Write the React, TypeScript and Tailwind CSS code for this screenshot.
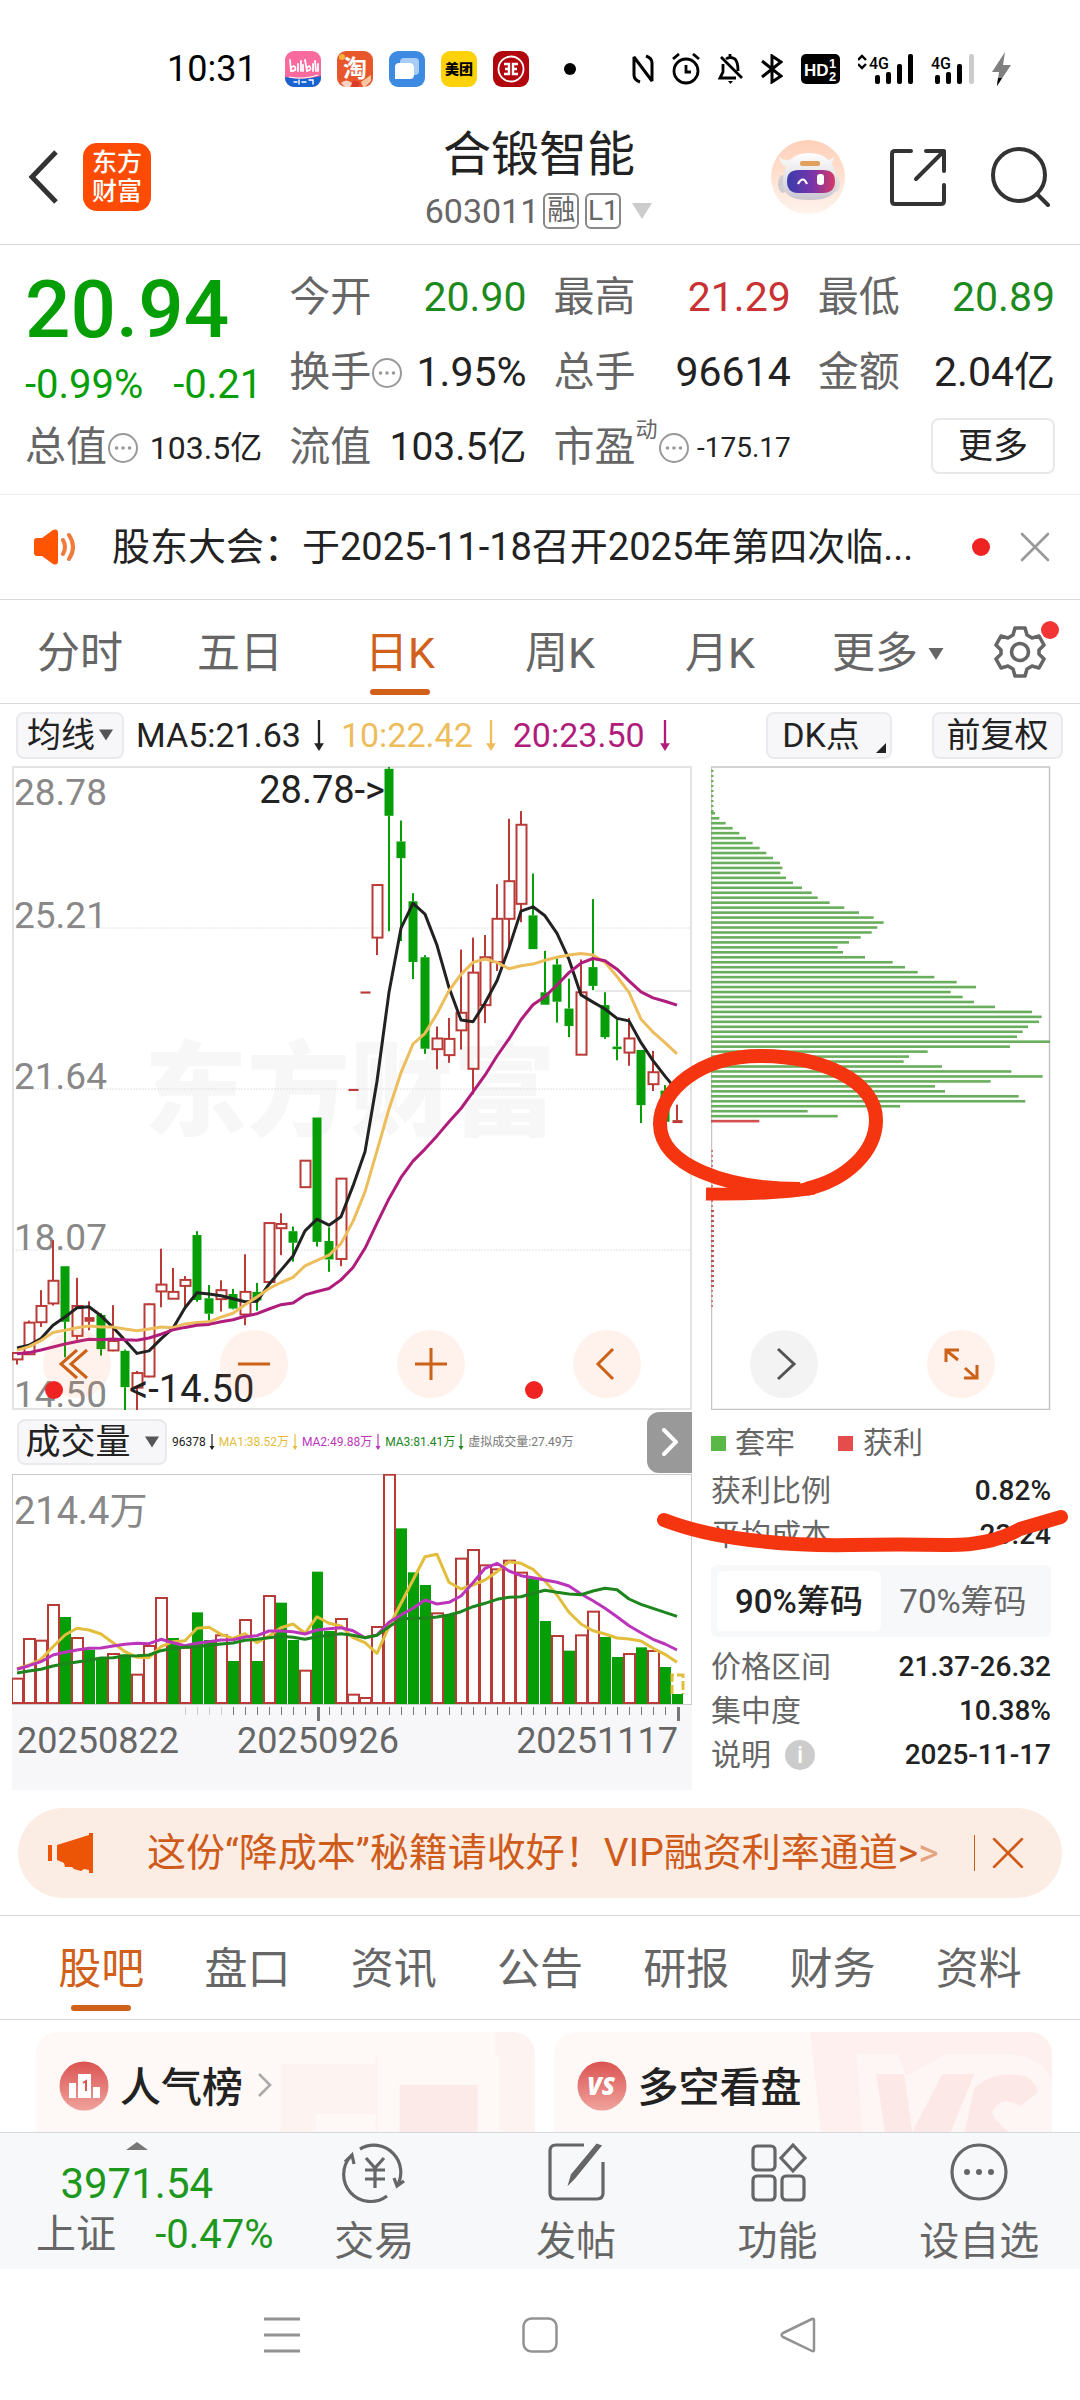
import React from "react";

type Candle = [kind: "r" | "g" | "f", high: number, top: number, bottom: number, low: number];

/* Candle and average values are in chart units: 2.34 units per pixel, measured down from y = 750. */
const candles: Candle[] = [
  ["r", 1411, 1411, 1426, 1438], ["r", 1335, 1340, 1414, 1414], ["r", 1264, 1301, 1339, 1350], ["r", 1147, 1242, 1295, 1300],
  ["g", 1208, 1208, 1338, 1421], ["r", 1235, 1301, 1371, 1380], ["f", 1290, 1327, 1338, 1358], ["g", 1318, 1322, 1402, 1417],
  ["r", 1299, 1383, 1405, 1407], ["g", 1403, 1406, 1491, 1547], ["r", 1453, 1458, 1492, 1545], ["r", 1295, 1297, 1466, 1468],
  ["r", 1167, 1251, 1267, 1304], ["r", 1212, 1268, 1284, 1284], ["r", 1231, 1240, 1254, 1305], ["g", 1126, 1135, 1287, 1291],
  ["g", 1252, 1283, 1319, 1335], ["r", 1241, 1264, 1285, 1314], ["g", 1261, 1273, 1307, 1309], ["r", 1180, 1268, 1321, 1346],
  ["g", 1247, 1268, 1288, 1312], ["r", 1107, 1107, 1245, 1247], ["r", 1084, 1109, 1119, 1182], ["g", 1115, 1126, 1153, 1197],
  ["r", 961, 961, 1023, 1023], ["g", 860, 860, 1151, 1162], ["g", 1117, 1149, 1192, 1221], ["r", 1003, 1003, 1191, 1208],
  ["f", 793, 793, 798, 798], ["f", 565, 565, 570, 570], ["r", 316, 316, 439, 480], ["g", 40, 44, 154, 424],
  ["g", 165, 214, 253, 447], ["g", 335, 354, 496, 536], ["g", 480, 485, 699, 711], ["r", 647, 675, 700, 747],
  ["r", 627, 676, 714, 732], ["r", 467, 615, 656, 701], ["r", 439, 521, 746, 806], ["r", 433, 485, 597, 639],
  ["r", 314, 395, 496, 517], ["r", 161, 307, 395, 463], ["r", 143, 175, 360, 403], ["g", 289, 387, 466, 466],
  ["g", 470, 567, 596, 596], ["g", 484, 502, 589, 638], ["g", 535, 605, 646, 672], ["r", 490, 567, 713, 713],
  ["g", 349, 508, 552, 562], ["g", 567, 597, 672, 676], ["g", 630, 694, 700, 726], ["r", 627, 675, 708, 739],
  ["g", 702, 702, 831, 873], ["r", 704, 754, 782, 798], ["g", 784, 797, 870, 885], ["f", 830, 866, 873, 873],
];

const ma5 = [1399, 1393, 1377, 1346, 1327, 1305, 1303, 1324, 1351, 1381, 1412, 1406, 1378, 1353, 1305, 1270, 1273, 1277, 1284, 1291, 1290, 1250, 1217, 1184, 1125, 1098, 1112, 1092, 1020, 940, 775, 567, 417, 359, 384, 457, 556, 632, 636, 592, 540, 463, 377, 367, 388, 429, 490, 573, 590, 606, 628, 634, 685, 727, 763, 797];
const ma10 = [1405, 1396, 1382, 1363, 1358, 1352, 1348, 1350, 1350, 1355, 1359, 1355, 1350, 1352, 1343, 1340, 1338, 1327, 1318, 1298, 1280, 1260, 1246, 1234, 1207, 1194, 1182, 1155, 1103, 1034, 938, 840, 755, 688, 663, 617, 563, 525, 497, 489, 497, 512, 505, 501, 492, 485, 480, 476, 480, 497, 530, 567, 630, 660, 685, 711];
const ma20 = [1413, 1410, 1404, 1397, 1390, 1384, 1379, 1380, 1378, 1380, 1381, 1376, 1367, 1357, 1351, 1346, 1344, 1338, 1333, 1325, 1319, 1308, 1298, 1294, 1275, 1267, 1260, 1240, 1211, 1166, 1107, 1050, 1000, 962, 934, 903, 870, 839, 800, 761, 716, 676, 631, 596, 577, 550, 521, 499, 488, 493, 513, 540, 566, 580, 588, 597];

/* Volume values are in thirds of a pixel, measured down from y = 1400. */
const volumeTops = [836, 717, 722, 615, 651, 714, 749, 775, 762, 763, 824, 738, 594, 714, 743, 637, 720, 706, 783, 660, 783, 588, 608, 720, 812, 515, 693, 657, 884, 894, 681, 224, 385, 517, 555, 640, 645, 476, 450, 496, 508, 482, 518, 535, 663, 708, 752, 706, 635, 711, 771, 762, 742, 753, 801, 882];
const volumeKinds = "rrrrgrggrgrrrgrggrgrgrggrggrrrrrgggrgrrrrrrggrgrrggrgrgg";
const vma1 = [806, 795, 778, 740, 705, 685, 690, 702, 728, 755, 772, 773, 740, 725, 722, 685, 682, 703, 715, 701, 728, 708, 683, 672, 700, 650, 670, 678, 713, 728, 760, 680, 610, 540, 470, 463, 547, 567, 555, 540, 515, 485, 490, 508, 543, 585, 637, 672, 692, 702, 714, 717, 723, 745, 763, 787];
const vma2 = [808, 797, 785, 765, 757, 750, 745, 744, 738, 733, 730, 731, 718, 728, 737, 730, 725, 720, 719, 711, 707, 693, 693, 695, 702, 690, 686, 683, 692, 713, 705, 667, 645, 625, 600, 612, 607, 588, 548, 505, 490, 513, 527, 533, 540, 547, 558, 582, 602, 625, 650, 677, 698, 718, 732, 750];
const vma3 = [819, 813, 808, 798, 791, 786, 781, 774, 773, 768, 767, 765, 752, 745, 742, 740, 736, 732, 729, 721, 718, 713, 709, 712, 718, 710, 706, 701, 706, 713, 706, 680, 657, 655, 655, 651, 645, 635, 620, 610, 598, 592, 590, 580, 571, 577, 582, 584, 573, 565, 569, 597, 613, 625, 637, 649];

const chips = [225, 238, 257, 278, 298, 318, 338, 359, 379, 399, 420, 427, 421, 438, 459, 486, 515, 533, 569, 613, 657, 701, 731, 712, 695, 662, 627, 593, 609, 675, 758, 795, 833, 883, 950, 1008, 932, 968, 1002, 1065, 1176, 1205, 1197, 1164, 1148, 1131, 1230, 1110, 863, 807, 791, 906, 1114, 1208, 1052, 885, 915, 1136, 1156, 780, 503, 593, 358];

const cx = (i: number) => 17 + i * 12;
const py = (v: number) => 750 + v / 2.34;
const vy = (v: number) => 1400 + v / 3;
const line = (values: number[], y: (v: number) => number) =>
  values.map((v, i) => `${cx(i)},${y(v).toFixed(1)}`).join(" ");

const RED = "#b93a37";
const GREEN = "#069e06";

function PriceChart() {
  return (
    <svg viewBox="12 766 680 644" className="block w-full" role="img" aria-label="日K线图">
      <g fontFamily="'Noto Sans CJK SC', sans-serif" fontWeight="900" fontSize="103" fill="#f7f7f7">
        <text x="144" y="1128">东方财富</text>
      </g>
      <rect x="13" y="767" width="678" height="642" fill="none" stroke="#e3e3e3" strokeWidth="2" />
      <g stroke="#e2e2e2" strokeWidth="1" strokeDasharray="2 1">
        <path d="M13 928H691M13 1089H691M13 1250H691" />
      </g>
      <path d="M595 991H691" stroke="#cfcfcf" strokeWidth="1" />
      <g fontFamily="Roboto, 'Noto Sans CJK SC', sans-serif" fontSize="37" fill="#888">
        <text x="14" y="805">28.78</text>
        <text x="14" y="928">25.21</text>
        <text x="14" y="1089">21.64</text>
        <text x="14" y="1250">18.07</text>
        <text x="14" y="1407">14.50</text>
      </g>
      {candles.map(([kind, high, top, bottom, low], i) => {
        const x = cx(i);
        const color = kind === "g" ? GREEN : RED;
        const h = Math.max(py(bottom) - py(top), 2);
        return (
          <g key={i} fill={color} stroke="none">
            {top > high && <rect x={x - 1} y={py(high)} width="2" height={py(top) - py(high)} />}
            {low > bottom && <rect x={x - 1} y={py(bottom)} width="2" height={py(low) - py(bottom)} />}
            {kind === "r" ? (
              <rect x={x - 4.5} y={py(top)} width="10" height={h} fill="none" stroke={RED} strokeWidth="2" />
            ) : (
              <rect x={x - 4.5} y={py(top)} width={kind === "f" ? 10 : 9} height={h} />
            )}
          </g>
        );
      })}
      <g fill="none" strokeWidth="3" strokeLinejoin="round">
        <polyline points={line(ma5, py)} stroke="#222" />
        <polyline points={line(ma10, py)} stroke="#edbd5c" />
        <polyline points={line(ma20, py)} stroke="#b01c7c" />
      </g>
      <g fontFamily="Roboto, sans-serif" fontSize="38" fill="#222">
        <text x="385" y="803" textAnchor="end">28.78-&gt;</text>
        <text x="129" y="1402">&lt;-14.50</text>
      </g>
    </svg>
  );
}

function VolumeChart() {
  return (
    <svg viewBox="12 1474 680 316" className="block w-full" role="img" aria-label="成交量图">
      <rect x="12" y="1705" width="680" height="85" fill="#f7f7fa" />
      <rect x="12.5" y="1474.5" width="679" height="230" fill="#fff" stroke="#ccc" />
      <text x="14" y="1524" fontFamily="Roboto, 'Noto Sans CJK SC', sans-serif" fontSize="38" fill="#888">214.4万</text>
      {volumeTops.map((v, i) => {
        const y = vy(v);
        return volumeKinds[i] === "r" ? (
          <rect key={i} x={cx(i) - 5} y={y} width="11" height={1703 - y} fill="#fff" stroke={RED} strokeWidth="2" />
        ) : (
          <rect key={i} x={cx(i) - 5} y={y} width="11" height={1704 - y} fill={GREEN} />
        );
      })}
      <path d="M672 1694V1675H683V1694" fill="none" stroke="#e3bd3c" strokeWidth="3" strokeDasharray="9 3" />
      <g fill="none" strokeWidth="3" strokeLinejoin="round">
        <polyline points={line(vma1, vy)} stroke="#e3bd3c" />
        <polyline points={line(vma2, vy)} stroke="#bb35bb" />
        <polyline points={line(vma3, vy)} stroke="#1c851c" />
      </g>
      {Array.from({ length: 42 }, (_, k) => k + 14).map((i) => {
        const major = i === 25 || i === 55;
        return (
          <rect key={i} x={cx(i)} y="1707" width={major ? 3 : 1} height={major ? 14 : 8} fill={i < 18 ? "#ccc" : "#777"} />
        );
      })}
      <g fontFamily="Roboto, sans-serif" fontSize="36" fill="#666">
        <text x="17" y="1753">20250822</text>
        <text x="318" y="1753" textAnchor="middle">20250926</text>
        <text x="678" y="1753" textAnchor="end">20251117</text>
      </g>
    </svg>
  );
}

function ChipChart() {
  return (
    <svg viewBox="711 766 340 644" className="block w-full" role="img" aria-label="筹码分布图">
      <rect x="711.5" y="767" width="338" height="642.5" fill="#fff" stroke="#c4c4c4" strokeWidth="1.5" />
      <path d="M712 770V812" stroke="#6fae60" strokeWidth="3" strokeDasharray="2 3" />
      <path d="M712 1150V1210M712 1290V1310" stroke="#d08080" strokeWidth="2" strokeDasharray="2 3" />
      <path d="M712.5 1210V1290" stroke="#c65050" strokeWidth="3" strokeDasharray="2 3" />
      {chips.map((end, i) => (
        <rect
          key={i}
          x="711"
          y={812 + i * 4.965}
          width={(end - 213) / 3}
          height="2.6"
          fill={i === chips.length - 1 ? "#d25050" : "#69ae5c"}
        />
      ))}
    </svg>
  );
}

function Caret({ className }: { className: string }) {
  return (
    <svg viewBox="0 0 20 16" className={className} fill="currentColor" aria-hidden="true">
      <path d="M0 0H20L10 16Z" />
    </svg>
  );
}

function DownArrow({ className }: { className: string }) {
  return (
    <svg viewBox="0 0 12 32" className={className} fill="none" stroke="currentColor" aria-hidden="true">
      <path d="M6 0V30" strokeWidth="2.4" />
      <path d="M1 24H11L6 32Z" fill="currentColor" stroke="none" />
    </svg>
  );
}

function More() {
  return (
    <svg viewBox="0 0 32 32" className="h-8 w-8 shrink-0" aria-hidden="true">
      <circle cx="16" cy="16" r="14" fill="none" stroke="#999" strokeWidth="2" />
      <g fill="#999"><circle cx="9.500" cy="16" r="1.8" /><circle cx="16" cy="16" r="1.8" /><circle cx="22.500" cy="16" r="1.8" /></g>
    </svg>
  );
}

function Close({ className }: { className: string }) {
  return (
    <svg viewBox="0 0 30 30" className={className} fill="none" stroke="currentColor" strokeWidth="2.6" strokeLinecap="round" aria-hidden="true">
      <path d="M2 2L28 28M28 2L2 28" />
    </svg>
  );
}

function StatusBar() {
  return (
    <div className="flex h-[110px] items-center justify-between pt-7 pr-[68px] pl-[167px]">
      <div className="flex items-center">
        <span className="w-[118px] text-[36px] leading-none text-black">10:31</span>
        <div className="flex items-center gap-4">
          <svg viewBox="0 0 36 36" className="h-9 w-9" aria-hidden="true">
            <rect width="36" height="36" rx="9" fill="#fb6a9c" />
            <path d="M0 26Q18 30 36 25V27A9 9 0 0 1 27 36H9A9 9 0 0 1 0 27Z" fill="#1763d0" />
            <g fill="none" stroke="#fff" strokeWidth="1.8" strokeLinecap="round">
              <path d="M5 9L6 20Q12 20 10 16Q8 14 6 17M13 13V20M16 10V20M18 14V20M20 9L22 20Q27 19 25 16Q24 14 22 17M28 13V20M30 10L31 20M33 13V20" />
              <path d="M9 31H12M14 29V33M17 31H21M24 29H28V33" strokeWidth="1.4" />
            </g>
            <path d="M4 26Q18 29 33 24" stroke="#fff" strokeWidth="1" fill="none" />
          </svg>
          <div className="relative flex h-9 w-9 items-center justify-center rounded-[9px] bg-[#e8572b] text-[24px] leading-none font-bold text-white">
            淘
            <svg viewBox="0 0 36 36" className="absolute inset-0 h-9 w-9" aria-hidden="true">
              <circle cx="5" cy="6" r="3" fill="#f5b23c" />
              <path d="M4 32Q9 27 15 32L13 36H8Z" fill="#f3d4c4" /><path d="M15 31Q19 28 23 32L21 36H15Z" fill="#d93a2c" />
              <path d="M24 31L34 24V30L28 36H26Z" fill="#f9c6a4" />
            </svg>
          </div>
          <svg viewBox="0 0 36 36" className="h-9 w-9" aria-hidden="true">
            <rect width="36" height="36" rx="9" fill="#3d8ae2" />
            <rect x="11" y="7" width="19" height="17" rx="4" fill="#a8cdf5" />
            <path d="M10 12H20Q25 12 25 17V24Q25 28 21 28H6V16Q6 12 10 12Z" fill="#fff" />
          </svg>
          <div className="flex h-9 w-9 items-center justify-center rounded-[9px] bg-[#fdd20a] text-[14px] leading-none font-black text-black">美团</div>
          <svg viewBox="0 0 36 36" className="h-9 w-9" fill="none" stroke="#fff" aria-hidden="true">
            <rect width="36" height="36" rx="9" fill="#b1060d" stroke="none" />
            <circle cx="18" cy="18" r="12.500" strokeWidth="1.8" />
            <path d="M11 13H16V23H11M25 13H20V23H25M12 18H16M20 18H24" strokeWidth="2.4" />
          </svg>
        </div>
        <span className="ml-[35px] h-3 w-3 rounded-full bg-black" />
      </div>
      <div className="flex items-center gap-[18px]">
        <svg viewBox="0 0 22 30" className="h-[30px] w-[22px]" fill="none" stroke="#000" strokeWidth="3" aria-hidden="true">
          <path d="M8 28Q2 26 2 21V3L20 27V9Q20 4 14 2" strokeLinejoin="bevel" />
        </svg>
        <svg viewBox="0 0 28 32" className="h-8 w-7" fill="none" stroke="#000" strokeWidth="2.8" aria-hidden="true">
          <circle cx="14" cy="18" r="12" /><path d="M14 12V19H19M1 6L7 1M27 6L21 1" />
        </svg>
        <svg viewBox="0 0 25 32" className="h-8 w-[25px]" fill="none" stroke="#000" strokeWidth="2.8" aria-hidden="true">
          <path d="M3 4L24 25M12 1V4M8 6Q12 3 17 6Q20 9 20 18M5 11V19L2 25H18" /><path d="M10 28H15L12.500 31Z" fill="#000" stroke="none" />
        </svg>
        <svg viewBox="0 0 22 30" className="h-[30px] w-[22px]" fill="none" stroke="#000" strokeWidth="3" aria-hidden="true">
          <path d="M1 7L20 22L11 28V2L20 8L1 23" />
        </svg>
        <svg viewBox="0 0 39 30" className="h-[30px] w-[39px]" aria-hidden="true">
          <rect width="39" height="30" rx="5" />
          <g fill="#fff" fontFamily="'Liberation Sans', sans-serif" fontWeight="700"><text x="3" y="22" fontSize="17">HD</text><text x="28" y="14" fontSize="13">1</text><text x="28" y="27" fontSize="13">2</text></g>
        </svg>
        <svg viewBox="0 0 55 30" className="h-[30px] w-[55px]" aria-hidden="true">
          <path d="M0 6L4 2L8 6M0 10L4 14L8 10" fill="none" stroke="#000" strokeWidth="2.4" />
          <text x="11" y="15" fontFamily="Roboto, sans-serif" fontWeight="500" fontSize="16">4G</text>
          <rect x="17" y="21" width="5" height="9" rx="2" /><rect x="28" y="18" width="5" height="12" rx="2" /><rect x="39" y="10" width="5" height="20" rx="2" /><rect x="50" width="5" height="30" rx="2" />
        </svg>
        <svg viewBox="0 0 43 30" className="h-[30px] w-[43px]" aria-hidden="true">
          <text x="0" y="15" fontFamily="Roboto, sans-serif" fontWeight="500" fontSize="16">4G</text>
          <rect x="4" y="21" width="5" height="9" rx="2" /><rect x="15" y="18" width="5" height="12" rx="2" /><rect x="26" y="10" width="5" height="20" rx="2" /><rect x="38" width="5" height="30" rx="2" fill="#ccc" />
        </svg>
        <svg viewBox="0 0 20 34" className="h-[34px] w-5" aria-hidden="true">
          <path d="M13 0L0 20H7L5 34L19 13H11Z" fill="#808080" /><path d="M6 26H10L5 34Z" />
        </svg>
      </div>
    </div>
  );
}

function Robot() {
  return (
    <svg viewBox="0 0 74 74" className="h-[74px] w-[74px]" aria-hidden="true">
      <defs>
        <linearGradient id="robot-bg" x1="0" y1="0" x2="0" y2="1"><stop offset="0" stopColor="#ffd0b8" /><stop offset="1" stopColor="#fff3ec" /></linearGradient>
        <linearGradient id="robot-face" x1="0" y1="0" x2="1" y2="0"><stop offset="0" stopColor="#3a3cae" /><stop offset=".55" stopColor="#7a35a8" /><stop offset="1" stopColor="#d83a63" /></linearGradient>
        <linearGradient id="robot-body" x1="0" y1="0" x2="0" y2="1"><stop offset="0" stopColor="#fff" /><stop offset="1" stopColor="#c9c6d0" /></linearGradient>
      </defs>
      <circle cx="37" cy="37" r="37" fill="url(#robot-bg)" />
      <path d="M8 16Q8 26 18 27L22 19Q12 22 8 16ZM63 16Q63 25 54 27L50 19Q59 22 63 16Z" fill="#f5f2f2" />
      <ellipse cx="12" cy="44" rx="5" ry="9" fill="#cfccd2" /><ellipse cx="65" cy="44" rx="4" ry="8" fill="#e3dede" />
      <path d="M38 13C58 13 66 28 66 44C66 56 54 60 39 60C22 60 12 56 12 42C12 25 20 13 38 13Z" fill="url(#robot-body)" />
      <rect x="29" y="21" width="20" height="5" rx="2" fill="#e2a05c" />
      <path d="M28 30H52Q64 30 64 41Q64 53 52 53H27Q16 53 16 41Q16 30 28 30Z" fill="url(#robot-face)" />
      <path d="M27 44Q32 35 36 44" fill="none" stroke="#fff" strokeWidth="2.2" /><rect x="46" y="34" width="7" height="11" rx="3" fill="#fff" />
    </svg>
  );
}

function Header() {
  return (
    <header className="grid h-[135px] grid-cols-[1fr_auto_1fr] items-center border-b border-[#d8d8d8] pr-[30px] pl-[28px]">
      <div className="flex items-center gap-[25px]">
        <button aria-label="返回" className="block">
          <svg viewBox="0 0 30 54" className="h-[54px] w-[30px]" fill="none" stroke="#333" strokeWidth="5" aria-hidden="true"><path d="M28 2L4 27L28 52" /></svg>
        </button>
        <div className="flex h-[68px] w-[68px] flex-col items-center justify-center rounded-[14px] bg-[#fe4b03] text-[25px] leading-[29px] font-medium text-white">
          <span>东方</span><span>财富</span>
        </div>
      </div>
      <div className="flex flex-col items-center gap-1 pt-1">
        <h1 className="text-[48px] leading-[60px] text-[#222]">合锻智能</h1>
        <button className="flex items-center text-[34px] leading-[44px] text-[#666]">
          603011
          <span className="ml-1 flex h-9 w-9 items-center justify-center rounded-[6px] border-2 border-[#888] text-[28px] leading-none">融</span>
          <span className="ml-[6px] flex h-9 w-9 items-center justify-center rounded-[6px] border-2 border-[#888] text-[28px] leading-none">L1</span>
          <Caret className="ml-[10px] h-4 w-[22px] text-[#ccc]" />
        </button>
      </div>
      <div className="flex items-center justify-end gap-[44px]">
        <button aria-label="智能助手"><Robot /></button>
        <button aria-label="分享">
          <svg viewBox="0 0 58 58" className="h-[58px] w-[58px]" fill="none" stroke="#333" strokeWidth="4" strokeLinecap="round" strokeLinejoin="round" aria-hidden="true">
            <path d="M22 3H6Q3 3 3 6V53Q3 56 6 56H52Q55 56 55 53V37M37 3H55V23M55 3L27 31" />
          </svg>
        </button>
        <button aria-label="搜索">
          <svg viewBox="0 0 59 60" className="h-[60px] w-[59px]" fill="none" stroke="#333" strokeWidth="4" strokeLinecap="round" aria-hidden="true">
            <circle cx="28" cy="28" r="26" /><path d="M46 47L57 58" />
          </svg>
        </button>
      </div>
    </header>
  );
}

function Quote({ label, value, tone = "text-[#222]" }: { label: React.ReactNode; value: string; tone?: string }) {
  return (
    <dl className="flex h-[75px] items-center justify-between whitespace-nowrap">
      <dt className="flex items-center text-[#666]">{label}</dt>
      <dd className={tone}>{value}</dd>
    </dl>
  );
}

function QuotePanel() {
  return (
    <section className="grid grid-cols-4 gap-x-[27px] border-b border-[#ececec] px-[25px] pt-[15px] pb-[9px] text-[41px] leading-none">
      <div className="row-span-2 text-[#069e06]">
        <p className="flex h-[100px] items-center text-[80px] font-medium">20.94</p>
        <p className="flex h-[50px] items-center justify-between text-[40px] whitespace-nowrap"><span>-0.99%</span><span>-0.21</span></p>
      </div>
      <Quote label="今开" value="20.90" tone="text-[#1d8a1d]" />
      <Quote label="最高" value="21.29" tone="text-[#c83232]" />
      <Quote label="最低" value="20.89" tone="text-[#1d8a1d]" />
      <Quote label={<>换手<More /></>} value="1.95%" />
      <Quote label="总手" value="96614" />
      <Quote label="金额" value="2.04亿" />
      <Quote label={<>总值<More /></>} value="103.5亿" tone="text-[32px] text-[#222]" />
      <Quote label="流值" value="103.5亿" tone="text-[39px] text-[#222]" />
      <Quote label={<>市盈<span className="-mt-[36px] text-[22px]">动</span><More /></>} value="-175.17" tone="text-[28px] text-[#222]" />
      <div className="flex h-[72px] items-center justify-end">
        <button className="h-[56px] w-[124px] rounded-[8px] border-2 border-[#e8e8e8] text-[35px] text-[#222]">更多</button>
      </div>
    </section>
  );
}

function News() {
  return (
    <section className="flex h-[105px] items-center border-b border-[#d8d8d8] pr-[30px] pl-[34px]">
      <svg viewBox="0 0 44 36" className="h-9 w-11 shrink-0" aria-hidden="true">
        <path d="M3 9Q0 9 0 12V24Q0 27 3 27H8L19 35Q24 37 24 32V4Q24 -1 19 1L8 9Z" fill="#ff5500" />
        <path d="M29 11Q33 18 29 25M35 6Q43 18 35 30" fill="none" stroke="#f27a3a" strokeWidth="4" strokeLinecap="round" />
      </svg>
      <a href="#news" className="ml-[34px] min-w-0 flex-1 truncate text-[38px] leading-[54px] text-[#222]">股东大会：于2025-11-18召开2025年第四次临...</a>
      <span className="ml-[24px] h-[18px] w-[18px] shrink-0 rounded-full bg-[#f02323]" />
      <button aria-label="关闭公告" className="ml-[30px] text-[#999]"><Close className="h-[30px] w-[30px]" /></button>
    </section>
  );
}

function PeriodTabs() {
  const tabs = ["分时", "五日", "日K", "周K", "月K"];
  return (
    <nav className="flex h-[104px] items-stretch border-b border-[#d8d8d8] text-[43px] text-[#666]">
      {tabs.map((t) => (
        <button key={t} className={t === "日K" ? "relative flex-[4] pt-1 text-[#d1601a]" : "flex-[4] pt-1"}>
          {t}
          {t === "日K" && <span className="absolute bottom-2 left-1/2 h-[6px] w-[60px] -translate-x-1/2 rounded-full bg-[#d1601a]" />}
        </button>
      ))}
      <button className="flex flex-[4] items-center justify-center pt-1"><span className="ml-[16px]">更多</span><Caret className="ml-[10px] h-3 w-4" /></button>
      <button aria-label="设置" className="relative flex flex-[3] items-center justify-center">
        <svg viewBox="0 0 52 52" className="h-[52px] w-[52px]" fill="none" stroke="#666" strokeWidth="3.6" strokeLinejoin="round" aria-hidden="true">
          <path d="M21 2H31L33 9L38 12L45 10L50 19L45 24V28L50 33L45 42L38 40L33 43L31 50H21L19 43L14 40L7 42L2 33L7 28V24L2 19L7 10L14 12L19 9Z" />
          <circle cx="26" cy="26" r="8.500" />
        </svg>
        <span className="absolute top-[21px] right-[21px] h-[18px] w-[18px] rounded-full bg-[#f23434]" />
      </button>
    </nav>
  );
}

function IndicatorBar() {
  const box = "flex h-[47px] items-center justify-center rounded-[8px] border-2 border-[#e9e9ee] bg-[#f7f7fa] text-[#222]";
  return (
    <div className="flex h-[62px] items-center pr-[17px] pl-[16px] text-[34px] leading-none whitespace-nowrap">
      <button className={`${box} w-[108px] gap-1`}>均线<Caret className="h-3 w-[14px] text-[#555]" /></button>
      <span className="ml-[12px] flex items-center gap-[12px] text-[#222]">MA5:21.63<DownArrow className="h-[31px] w-3" /></span>
      <span className="ml-[16px] flex items-center gap-[12px] text-[#edbd5c]">10:22.42<DownArrow className="h-[31px] w-3" /></span>
      <span className="ml-[16px] flex items-center gap-[14px] text-[#b01c7c]">20:23.50<DownArrow className="h-[31px] w-3" /></span>
      <div className="ml-auto flex gap-[40px]">
        <button className={`${box} relative w-[126px] pr-4`}>
          DK点
          <svg viewBox="0 0 10 10" className="absolute right-1 bottom-1 h-[10px] w-[10px]" aria-hidden="true"><path d="M10 0V10H0Z" fill="#222" /></svg>
        </button>
        <button className={`${box} w-[131px]`}>前复权</button>
      </div>
    </div>
  );
}

function VolumeBar() {
  return (
    <div className="flex h-16 items-center pl-[5px] whitespace-nowrap">
      <button className="flex h-[46px] w-[150px] items-center justify-center gap-[14px] rounded-[8px] border-2 border-[#e9e9ee] bg-[#f7f7fa] text-[35px] leading-none text-[#222]">
        成交量<Caret className="h-3 w-[14px] text-[#555]" />
      </button>
      <div className="ml-[5px] flex items-center gap-1 text-[12px]">
        <span className="flex items-center gap-[3px] text-[#222]">96378<DownArrow className="h-4 w-[6px]" /></span>
        <span className="flex items-center gap-[3px] text-[#e3bd3c]">MA1:38.52万<DownArrow className="h-4 w-[6px]" /></span>
        <span className="flex items-center gap-[3px] text-[#bb35bb]">MA2:49.88万<DownArrow className="h-4 w-[6px]" /></span>
        <span className="flex items-center gap-[3px] text-[#1c851c]">MA3:81.41万<DownArrow className="h-4 w-[6px]" /></span>
        <span className="text-[#777]">虚拟成交量:27.49万</span>
      </div>
      <button aria-label="展开" className="ml-auto flex h-[61px] w-[45px] items-center justify-center rounded-l-[12px] bg-[#999]">
        <svg viewBox="0 0 16 28" className="h-7 w-4" fill="none" stroke="#fff" strokeWidth="4" strokeLinecap="round" aria-hidden="true"><path d="M2 2L14 14L2 26" /></svg>
      </button>
    </div>
  );
}

function Stat({ label, value }: { label: React.ReactNode; value: string }) {
  return (
    <div className="flex h-11 items-center justify-between whitespace-nowrap">
      <dt className="flex items-center text-[30px] text-[#666]">{label}</dt>
      <dd className="text-[28px] font-medium text-[#222]">{value}</dd>
    </div>
  );
}

function ChipPanel() {
  return (
    <div className="pt-[9px] leading-none">
      <div className="flex h-12 items-center text-[30px] text-[#666]">
        <span className="mr-[9px] h-[15px] w-[15px] bg-[#5ab946]" />套牢
        <span className="mr-[10px] ml-[43px] h-[15px] w-[15px] bg-[#e54c4c]" />获利
      </div>
      <dl className="mt-[2px]">
        <Stat label="获利比例" value="0.82%" />
        <Stat label="平均成本" value="23.24" />
      </dl>
      <div className="mt-2 flex h-[72px] rounded-[6px] bg-[#f7f8fa] p-[6px] text-[33px] whitespace-nowrap">
        <button className="flex-1 rounded-[6px] bg-white font-medium text-[#222]">90%筹码</button>
        <button className="flex-1 text-[#666]">70%筹码</button>
      </div>
      <dl className="mt-2">
        <Stat label="价格区间" value="21.37-26.32" />
        <Stat label="集中度" value="10.38%" />
        <Stat
          label={<>说明<span className="ml-[14px] flex h-[30px] w-[30px] items-center justify-center rounded-full bg-[#ccc] text-[24px] font-medium text-white">i</span></>}
          value="2025-11-17"
        />
      </dl>
    </div>
  );
}

function ChartControls() {
  const round = "flex h-[68px] w-[68px] items-center justify-center rounded-full";
  const icons: [string, string][] = [
    ["快退", "M24 10L8 24L24 38M34 10L18 24L34 38"],
    ["缩小", "M8 24H40"],
    ["放大", "M8 24H40M24 8V40"],
    ["左移", "M30 9L15 24L30 39"],
    ["右移", "M18 9L34 24L18 39"],
    ["全屏", "M9 22V10H22M10 11L21 20M28 28L38 37M40 25V38H27"],
  ];
  return (
    <div className="absolute top-[564px] right-[85px] left-[43px] flex justify-between">
      {icons.map(([name, d]) => (
        <button key={name} aria-label={name} className={name === "右移" ? `${round} bg-[#f3f3f3] text-[#555]` : `${round} bg-[#ff7a3a]/10 text-[#cc6118]`}>
          <svg viewBox="0 0 48 48" className="h-12 w-12" fill="none" stroke="currentColor" strokeWidth="3" aria-hidden="true"><path d={d} /></svg>
        </button>
      ))}
    </div>
  );
}

function ChartSection() {
  return (
    <section className="relative">
      <div className="grid grid-cols-[minmax(0,2fr)_minmax(0,1fr)] gap-[19px] pr-[29px] pl-3">
        <div>
          <PriceChart />
          <VolumeBar />
          <VolumeChart />
        </div>
        <div>
          <ChipChart />
          <ChipPanel />
        </div>
      </div>
      <ChartControls />
      <svg viewBox="0 766 1080 1024" className="pointer-events-none absolute inset-0 h-full w-full" aria-hidden="true">
        <circle cx="54" cy="1390" r="9" fill="#f02323" /><circle cx="534" cy="1390" r="9" fill="#f02323" />
        <g fill="none" stroke="#f5350f" strokeWidth="14" strokeLinejoin="round">
          <path d="M806 1189C846 1180 876 1152 876 1120C876 1080 820 1056 760 1056C700 1056 660 1090 660 1124C660 1165 725 1189 800 1189" />
          <path d="M706 1194Q770 1195 814 1188" strokeWidth="13" />
          <path d="M664 1520Q700 1534 750 1540T850 1545T945 1545T1020 1529L1061 1517" strokeLinecap="round" />
        </g>
      </svg>
    </section>
  );
}

function Banner() {
  return (
    <aside className="mx-[18px] mt-[18px] flex h-[90px] items-center rounded-full bg-[#fcede4] pr-[38px] pl-[30px] text-[#cf5b1b]">
      <svg viewBox="0 0 46 40" className="h-10 w-[46px] shrink-0" fill="#eb5505" aria-hidden="true">
        <path d="M0 12H4V28H0ZM9 12L41 2V0H45V40H41V37L36 36L33 38L26 36L24 34H17L16 30L9 27Z" />
      </svg>
      <a href="#vip" className="ml-[53px] min-w-0 flex-1 overflow-hidden text-[39px] leading-[54px] whitespace-nowrap">这份“降成本”秘籍请收好！VIP融资利率通道&gt;<span className="opacity-50">&gt;</span></a>
      <span className="h-9 w-px bg-[#cf5b1b]" />
      <button aria-label="关闭广告" className="ml-[17px]"><Close className="h-8 w-8" /></button>
    </aside>
  );
}

function InfoTabs() {
  const tabs = ["股吧", "盘口", "资讯", "公告", "研报", "财务", "资料"];
  return (
    <nav className="mt-[17px] flex h-[105px] border-y border-[#d8d8d8] px-[28px] text-[43px] text-[#666]">
      {tabs.map((t, i) => (
        <button key={t} className={i === 0 ? "relative flex-1 pt-1 text-[#d1601a]" : "flex-1 pt-1"}>
          {t}
          {i === 0 && <span className="absolute bottom-2 left-1/2 h-[6px] w-[60px] -translate-x-1/2 rounded-full bg-[#d1601a]" />}
        </button>
      ))}
    </nav>
  );
}

function Cards() {
  const card = "relative flex h-[150px] items-start overflow-hidden rounded-[22px] bg-[#fef8f6] pt-[29px] pl-[23px]";
  return (
    <section className="grid h-[112px] grid-cols-2 gap-[19px] overflow-hidden px-[28px] pt-3 pl-[36px]">
      <a href="#rank" className={card}>
        <svg viewBox="0 0 499 150" className="absolute inset-0 h-full w-full" aria-hidden="true">
          <path d="M290 0H499V150H340V24H460V0ZM245 32H340V82H280V150H245Z" fill="#fdf3f1" />
          <path d="M342 24H464V150H342Z" fill="#fef8f6" /><rect x="364" y="53" width="78" height="97" fill="#fceae8" />
        </svg>
        <svg viewBox="0 0 50 50" className="relative h-[50px] w-[50px]" aria-hidden="true">
          <defs><linearGradient id="badge" x1="0" y1="0" x2="0" y2="1"><stop offset="0" stopColor="#da5452" /><stop offset="1" stopColor="#f0a29c" /></linearGradient></defs>
          <circle cx="25" cy="25" r="24.500" fill="url(#badge)" />
          <path d="M10 22H17V37H10ZM34 26H41V37H34ZM19 13H32V37H19Z" fill="#fff" /><path d="M24 22L27 20V30" stroke="#da5452" strokeWidth="2" fill="none" />
        </svg>
        <span className="relative ml-[11px] text-[41px] leading-[54px] font-medium text-[#222]">人气榜</span>
        <svg viewBox="0 0 14 24" className="relative mt-[12px] ml-[15px] h-6 w-[14px]" fill="none" stroke="#aaa" strokeWidth="2.6" aria-hidden="true"><path d="M1 1L12 12L1 23" /></svg>
      </a>
      <a href="#versus" className={card}>
        <svg viewBox="0 0 498 150" className="absolute inset-0 h-full w-full" aria-hidden="true">
          <path d="M256 0H498V150H272Z" fill="#fdf0ee" />
          <path d="M302 22H344L352 44L392 22H450Q498 24 498 60V150H312Z" fill="#fef6f4" />
          <path d="M322 42H350L358 100L388 42H420L376 150H338ZM420 56Q440 38 470 44Q480 48 484 60L466 74Q446 62 438 80Q438 90 470 110L480 150H400Z" fill="#fce8e6" />
        </svg>
        <svg viewBox="0 0 50 50" className="relative h-[50px] w-[50px]" aria-hidden="true">
          <circle cx="25" cy="25" r="24.500" fill="url(#badge)" />
          <text x="24" y="34" textAnchor="middle" fontFamily="'Open Sans', sans-serif" fontWeight="800" fontStyle="italic" fontSize="24" fill="#fff">VS</text>
        </svg>
        <span className="relative ml-[11px] text-[41px] leading-[54px] font-medium text-[#222]">多空看盘</span>
      </a>
    </section>
  );
}

function BottomBar() {
  const items: [string, React.ReactNode][] = [
    ["交易", <><path d="M9 16A27 27 0 0 0 45 56M18 9A27 27 0 0 1 55 46M3 22L10 15L12 24M52 38L55 46L62 41" /><path d="M24 18L33 28L42 18M23 30H43M23 39H43M33 28V48" /></>],
    ["发帖", <><path d="M40 5H12Q6 5 6 11V53Q6 59 12 59H53Q59 59 59 53V22" /><path d="M56 6L30 38L26 42L28 35L53 5Z" fill="#666" strokeWidth="2.5" /></>],
    ["功能", <><rect x="7" y="6" width="22" height="24" rx="4" /><rect x="7" y="36" width="22" height="24" rx="4" /><rect x="36" y="36" width="22" height="24" rx="4" /><path d="M47 5L59 18L47 31L35 18Z" /></>],
    ["设自选", <><circle cx="32" cy="32" r="27" /><g fill="#666" stroke="none"><circle cx="20" cy="32" r="3" /><circle cx="32" cy="32" r="3" /><circle cx="44" cy="32" r="3" /></g></>],
  ];
  return (
    <nav className="grid h-[137px] grid-cols-[274fr_202fr_202fr_202fr_202fr] border-t border-[#d5d8dc] bg-[#f7f8fa] text-[40px] leading-none text-[#666]">
      <button className="flex flex-col items-center pt-[9px] whitespace-nowrap">
        <svg viewBox="0 0 22 8" className="h-2 w-[22px]" fill="#777" aria-hidden="true"><path d="M0 8L11 0L22 8Z" /></svg>
        <span className="mt-[11px] text-[42px] leading-[46px] text-[#1d981d]">3971.54</span>
        <span className="flex w-full justify-between pt-[2px] pl-[36px] leading-[52px]">上证<span className="text-[#1d981d]">-0.47%</span></span>
      </button>
      {items.map(([label, icon]) => (
        <button key={label} className="flex flex-col items-center pt-[7px]">
          <svg viewBox="0 0 64 64" className="h-16 w-16" fill="none" stroke="#666" strokeWidth="3.2" aria-hidden="true">{icon}</svg>
          <span className="mt-3 leading-[52px]">{label}</span>
        </button>
      ))}
    </nav>
  );
}

function SystemNav() {
  return (
    <div className="flex h-[131px] items-center justify-center gap-[222px]">
      <button aria-label="最近任务">
        <svg viewBox="0 0 36 36" className="h-9 w-9" stroke="#929292" strokeWidth="3" aria-hidden="true"><path d="M0 2H36M0 18H36M0 34H36" /></svg>
      </button>
      <button aria-label="主页">
        <svg viewBox="0 0 36 36" className="h-9 w-9" fill="none" stroke="#929292" strokeWidth="2.500" aria-hidden="true"><rect x="1.500" y="1.500" width="33" height="33" rx="8" /></svg>
      </button>
      <button aria-label="返回上一页">
        <svg viewBox="0 0 36 36" className="h-9 w-9" fill="none" stroke="#929292" strokeWidth="2.500" strokeLinejoin="round" aria-hidden="true"><path d="M34 3V33Q34 35 32 34L3 20Q0 18 3 16L32 2Q34 1 34 3Z" /></svg>
      </button>
    </div>
  );
}

export default function App() {
  return (
    <main className="overflow-hidden bg-white [font-family:Roboto,'Noto_Sans_CJK_SC',sans-serif]">
      <StatusBar />
      <Header />
      <QuotePanel />
      <News />
      <PeriodTabs />
      <IndicatorBar />
      <ChartSection />
      <Banner />
      <InfoTabs />
      <Cards />
      <BottomBar />
      <SystemNav />
    </main>
  );
}
